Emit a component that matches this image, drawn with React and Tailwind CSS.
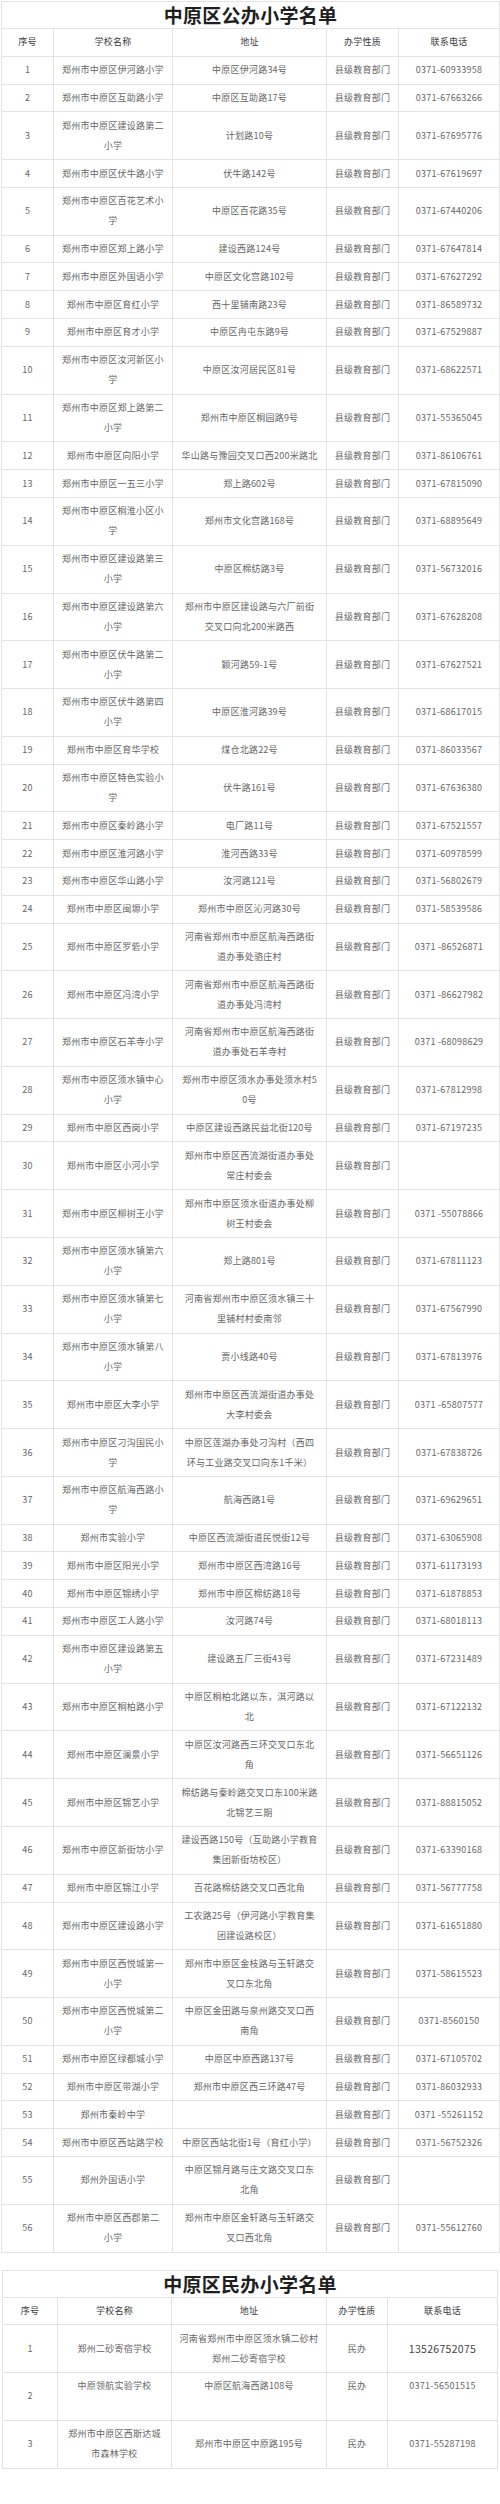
import React from "react";

const T = "县级教育部门";
const publicRows = [
  ["1", "郑州市中原区伊河路小学", "中原区伊河路34号", "0371-60933958"],
  ["2", "郑州市中原区互助路小学", "中原区互助路17号", "0371-67663266"],
  ["3", "郑州市中原区建设路第二\n小学", "计划路10号", "0371-67695776"],
  ["4", "郑州市中原区伏牛路小学", "伏牛路142号", "0371-67619697"],
  ["5", "郑州市中原区百花艺术小\n学", "中原区百花路35号", "0371-67440206"],
  ["6", "郑州市中原区郑上路小学", "建设西路124号", "0371-67647814"],
  ["7", "郑州市中原区外国语小学", "中原区文化宫路102号", "0371-67627292"],
  ["8", "郑州市中原区育红小学", "西十里铺南路23号", "0371-86589732"],
  ["9", "郑州市中原区育才小学", "中原区冉屯东路9号", "0371-67529887"],
  ["10", "郑州市中原区汝河新区小\n学", "中原区汝河居民区81号", "0371-68622571"],
  ["11", "郑州市中原区郑上路第二\n小学", "郑州市中原区桐园路9号", "0371-55365045"],
  ["12", "郑州市中原区向阳小学", "华山路与豫园交叉口西200米路北", "0371-86106761"],
  ["13", "郑州市中原区一五三小学", "郑上路602号", "0371-67815090"],
  ["14", "郑州市中原区桐淮小区小\n学", "郑州市文化宫路168号", "0371-68895649"],
  ["15", "郑州市中原区建设路第三\n小学", "中原区棉纺路3号", "0371-56732016"],
  ["16", "郑州市中原区建设路第六\n小学", "郑州市中原区建设路与六厂前街\n交叉口向北200米路西", "0371-67628208"],
  ["17", "郑州市中原区伏牛路第二\n小学", "颖河路59-1号", "0371-67627521"],
  ["18", "郑州市中原区伏牛路第四\n小学", "中原区淮河路39号", "0371-68617015"],
  ["19", "郑州市中原区育华学校", "煤仓北路22号", "0371-86033567"],
  ["20", "郑州市中原区特色实验小\n学", "伏牛路161号", "0371-67636380"],
  ["21", "郑州市中原区秦岭路小学", "电厂路11号", "0371-67521557"],
  ["22", "郑州市中原区淮河路小学", "淮河西路33号", "0371-60978599"],
  ["23", "郑州市中原区华山路小学", "汝河路121号", "0371-56802679"],
  ["24", "郑州市中原区闽塬小学", "郑州市中原区沁河路30号", "0371-58539586"],
  ["25", "郑州市中原区罗砦小学", "河南省郑州市中原区航海西路街\n道办事处骆庄村", "0371 -86526871"],
  ["26", "郑州市中原区冯湾小学", "河南省郑州市中原区航海西路街\n道办事处冯湾村", "0371 -86627982"],
  ["27", "郑州市中原区石羊寺小学", "河南省郑州市中原区航海西路街\n道办事处石羊寺村", "0371 -68098629"],
  ["28", "郑州市中原区须水镇中心\n小学", "郑州市中原区须水办事处须水村5\n0号", "0371-67812998"],
  ["29", "郑州市中原区西岗小学", "中原区建设西路民益北街120号", "0371-67197235"],
  ["30", "郑州市中原区小河小学", "郑州市中原区西流湖街道办事处\n常庄村委会", ""],
  ["31", "郑州市中原区柳树王小学", "郑州市中原区须水街道办事处柳\n树王村委会", "0371 -55078866"],
  ["32", "郑州市中原区须水镇第六\n小学", "郑上路801号", "0371-67811123"],
  ["33", "郑州市中原区须水镇第七\n小学", "河南省郑州市中原区须水镇三十\n里铺村村委南邻", "0371-67567990"],
  ["34", "郑州市中原区须水镇第八\n小学", "贾小线路40号", "0371-67813976"],
  ["35", "郑州市中原区大李小学", "郑州市中原区西流湖街道办事处\n大李村委会", "0371 -65807577"],
  ["36", "郑州市中原区刁沟国民小\n学", "中原区莲湖办事处刁沟村（西四\n环与工业路交叉口向东1千米）", "0371-67838726"],
  ["37", "郑州市中原区航海西路小\n学", "航海西路1号", "0371-69629651"],
  ["38", "郑州市实验小学", "中原区西流湖街道民悦街12号", "0371-63065908"],
  ["39", "郑州市中原区阳光小学", "郑州市中原区西湾路16号", "0371-61173193"],
  ["40", "郑州市中原区锦绣小学", "郑州市中原区棉纺路18号", "0371-61878853"],
  ["41", "郑州市中原区工人路小学", "汝河路74号", "0371-68018113"],
  ["42", "郑州市中原区建设路第五\n小学", "建设路五厂三街43号", "0371-67231489"],
  ["43", "郑州市中原区桐柏路小学", "中原区桐柏北路以东，淇河路以\n北", "0371-67122132"],
  ["44", "郑州市中原区澜景小学", "中原区汝河路西三环交叉口东北\n角", "0371-56651126"],
  ["45", "郑州市中原区锦艺小学", "棉纺路与秦岭路交叉口东100米路\n北锦艺三期", "0371-88815052"],
  ["46", "郑州市中原区新街坊小学", "建设西路150号（互助路小学教育\n集团新街坊校区）", "0371-63390168"],
  ["47", "郑州市中原区锦江小学", "百花路棉纺路交叉口西北角", "0371-56777758"],
  ["48", "郑州市中原区建设路小学", "工农路25号（伊河路小学教育集\n团建设路校区）", "0371-61651880"],
  ["49", "郑州市中原区西悦城第一\n小学", "郑州市中原区金枝路与玉轩路交\n叉口东北角", "0371-58615523"],
  ["50", "郑州市中原区西悦城第二\n小学", "中原区金田路与泉州路交叉口西\n南角", "0371-8560150"],
  ["51", "郑州市中原区绿都城小学", "中原区中原西路137号", "0371-67105702"],
  ["52", "郑州市中原区带湖小学", "郑州市中原区西三环路47号", "0371-86032933"],
  ["53", "郑州市秦岭中学", "", "0371 -55261152"],
  ["54", "郑州市中原区西站路学校", "中原区西站北街1号（育红小学）", "0371-56752326"],
  ["55", "郑州外国语小学", "中原区锦月路与庄文路交叉口东\n北角", ""],
  ["56", "郑州市中原区西郡第二\n小学", "郑州市中原区金轩路与玉轩路交\n叉口西北角", "0371-55612760"],
];

const privateRows = [
  ["1", "郑州二砂寄宿学校", "河南省郑州市中原区须水镇二砂村\n郑州二砂寄宿学校", "民办", "13526752075", true],
  ["2", "中原领航实验学校\n\u00a0", "中原区航海西路108号\n\u00a0", "民办\n\u00a0", "0371-56501515\n\u00a0", false],
  ["3", "郑州市中原区西斯达城\n市森林学校", "郑州市中原区中原路195号", "民办", "0371-55287198", false],
];

const td =
  "border border-[#e3e3e3] px-0 py-[3.4px] text-center align-middle whitespace-pre leading-[20px]";
const body = "text-[9px] tracking-[0.25px] text-[#666666]";
const head = "text-[9px] tracking-[0.25px] text-[#3a3a3a]";

function Title({ children }) {
  return (
    <tr>
      <td
        colSpan={5}
        className="border border-[#e3e3e3] text-center align-middle leading-[26px] py-0 text-[19px] font-bold text-[#1f1f1f] tracking-[0.3px]"
      >
        {children}
      </td>
    </tr>
  );
}

function Header() {
  return (
    <tr>
      {["序号", "学校名称", "地址", "办学性质", "联系电话"].map((h) => (
        <td key={h} className={`${td} ${head}`}>
          {h}
        </td>
      ))}
    </tr>
  );
}

export default function App() {
  return (
    <div className="w-[500px] bg-white pt-[1px] font-['Noto_Sans_CJK_SC','Noto_Sans',sans-serif]">
      <table className="ml-[1px] w-[498px] table-fixed border-collapse">
        <colgroup>
          <col className="w-[52px]" />
          <col className="w-[119px]" />
          <col className="w-[154px]" />
          <col className="w-[72px]" />
          <col className="w-[101px]" />
        </colgroup>
        <tbody>
          <Title>中原区公办小学名单</Title>
          <Header />
          {publicRows.map(([n, name, addr, phone]) => (
            <tr key={n}>
              <td className={`${td} ${body}`}>{n}</td>
              <td className={`${td} ${body}`}>{name}</td>
              <td className={`${td} ${body}`}>{addr}</td>
              <td className={`${td} ${body}`}>{T}</td>
              <td className={`${td} ${body}`}>{phone}</td>
            </tr>
          ))}
        </tbody>
      </table>

      <table className="mt-[17px] ml-[2px] w-[495px] table-fixed border-collapse">
        <colgroup>
          <col className="w-[55px]" />
          <col className="w-[114px]" />
          <col className="w-[155px]" />
          <col className="w-[61px]" />
          <col className="w-[110px]" />
        </colgroup>
        <tbody>
          <Title>中原区民办小学名单</Title>
          <Header />
          {privateRows.map(([n, name, addr, kind, phone, big]) => (
            <tr key={n}>
              <td className={`${td} ${body}`}>{n}</td>
              <td className={`${td} ${body}`}>{name}</td>
              <td className={`${td} ${body}`}>{addr}</td>
              <td className={`${td} ${body}`}>{kind}</td>
              <td
                className={`${td} ${
                  big
                    ? "text-[10.5px] tracking-[0.3px] text-[#444444]"
                    : body
                }`}
              >
                {phone}
              </td>
            </tr>
          ))}
        </tbody>
      </table>
    </div>
  );
}
